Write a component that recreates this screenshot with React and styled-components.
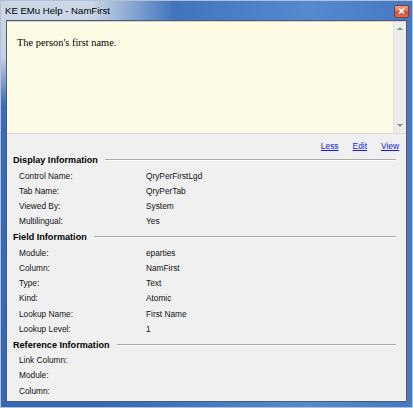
import React from "react";
import styled, { createGlobalStyle } from "styled-components";

const GlobalStyle = createGlobalStyle`
  html, body {
    margin: 0;
    padding: 0;
    background: #ffffff;
  }
  * {
    box-sizing: border-box;
  }
`;

const sections = [
  {
    title: "Display Information",
    rows: [
      ["Control Name:", "QryPerFirstLgd"],
      ["Tab Name:", "QryPerTab"],
      ["Viewed By:", "System"],
      ["Multilingual:", "Yes"],
    ],
  },
  {
    title: "Field Information",
    rows: [
      ["Module:", "eparties"],
      ["Column:", "NamFirst"],
      ["Type:", "Text"],
      ["Kind:", "Atomic"],
      ["Lookup Name:", "First Name"],
      ["Lookup Level:", "1"],
    ],
  },
  {
    title: "Reference Information",
    rows: [
      ["Link Column:", ""],
      ["Module:", ""],
      ["Column:", ""],
    ],
  },
];

const App = () => {
  return (
    <>
      <GlobalStyle />
      <Window>
        <TitleBar>
          <Title>KE EMu Help - NamFirst</Title>
          <CloseButton>
            <svg width="7" height="6" viewBox="0 0 7 6">
              <path d="M1 0.5 L6 5.5 M6 0.5 L1 5.5" stroke="#ffffff" strokeWidth="1.6" />
            </svg>
          </CloseButton>
        </TitleBar>
        <Client>
          <Description>
            <DescText>The person's first name.</DescText>
            <ScrollBar>
              <Arrow $dir="up" />
              <Arrow $dir="down" />
            </ScrollBar>
          </Description>
          <Details>
            <LinkRow>
              <Link href="#">Less</Link>
              <Link href="#">Edit</Link>
              <Link href="#">View</Link>
            </LinkRow>
            {sections.map((section) => (
              <Section key={section.title}>
                <SectionHeader>
                  <SectionTitle>{section.title}</SectionTitle>
                  <Rule />
                </SectionHeader>
                {section.rows.map(([label, value]) => (
                  <Row key={label}>
                    <Label>{label}</Label>
                    <Value>{value}</Value>
                  </Row>
                ))}
              </Section>
            ))}
          </Details>
        </Client>
      </Window>
    </>
  );
};

const Window = styled.div`
  width: 413px;
  height: 408px;
  display: flex;
  flex-direction: column;
  padding: 0 5px 5px 5px;
  border: 1px solid #b3c1d4;
  background:
    linear-gradient(
      to right,
      rgba(59, 108, 182, 0) 0%,
      rgba(59, 108, 182, 0) 22%,
      rgba(66, 116, 190, 1) 42%,
      rgba(86, 137, 206, 1) 75%,
      rgba(70, 120, 194, 1) 100%
    ),
    linear-gradient(to bottom, #cbd7e7 0px, #c4d2e5 55px, #3b6cb6 105px, #3767b3 100%);
`;

const TitleBar = styled.div`
  height: 19px;
  margin: 0 -5px;
  padding: 0 3px 0 4px;
  display: flex;
  align-items: center;
  justify-content: space-between;
`;

const Title = styled.span`
  font-family: "Liberation Sans", Arial, sans-serif;
  font-size: 9.6px;
  color: #000000;
`;

const CloseButton = styled.div`
  width: 15px;
  height: 13px;
  margin-top: 1px;
  display: flex;
  align-items: center;
  justify-content: center;
  border: 1px solid #8a3a28;
  border-radius: 2px;
  background: linear-gradient(to bottom, #eea48e 0%, #de7458 45%, #c9503a 55%, #d8735a 100%);
`;

const Client = styled.div`
  flex: 1;
  display: flex;
  flex-direction: column;
  border: 1px solid #4e5b6a;
  background: #f0f0f0;
`;

const Description = styled.div`
  height: 113px;
  display: flex;
  background: #fffce6;
  border-top: 1px solid #d4d4d4;
  border-bottom: 1px solid #dadada;
`;

const DescText = styled.div`
  flex: 1;
  padding: 15px 0 0 10px;
  font-family: "Liberation Serif", "Times New Roman", serif;
  font-size: 10.4px;
  line-height: 12px;
  color: #000000;
`;

const ScrollBar = styled.div`
  width: 13px;
  display: flex;
  flex-direction: column;
  justify-content: space-between;
  align-items: center;
  padding: 5px 0 6px;
  background: #ececec;
  border-left: 1px solid #e0e0e0;
`;

const Arrow = styled.div`
  width: 0;
  height: 0;
  border-left: 3px solid transparent;
  border-right: 3px solid transparent;
  ${({ $dir }) =>
    $dir === "up"
      ? "border-bottom: 3px solid #8c8c8c;"
      : "border-top: 3px solid #8c8c8c;"}
`;

const Details = styled.div`
  flex: 1;
  padding: 7px 7px 0 6px;
  font-family: "Liberation Sans", Arial, sans-serif;
  font-size: 8.3px;
  color: #000000;
`;

const LinkRow = styled.div`
  height: 11px;
  display: flex;
  justify-content: flex-end;
  align-items: center;
  gap: 14px;
`;

const Link = styled.a`
  color: #1515f0;
  text-decoration: underline;
  font-size: 8.4px;
  line-height: 11px;
`;

const Section = styled.div`
  margin-right: 3px;
`;

const SectionHeader = styled.div`
  height: 16px;
  display: flex;
  align-items: center;
`;

const SectionTitle = styled.span`
  font-weight: bold;
  font-size: 9.1px;
  white-space: nowrap;
`;

const Rule = styled.div`
  flex: 1;
  margin-left: 7px;
  height: 2px;
  border-top: 1px solid #a9a9a9;
  border-bottom: 1px solid #ffffff;
`;

const Row = styled.div`
  height: 15.25px;
  display: grid;
  grid-template-columns: 127px 1fr;
  align-items: center;
  padding-left: 6px;
`;

const Label = styled.span`
  color: #111111;
`;

const Value = styled.span`
  color: #111111;
`;

export default App;
